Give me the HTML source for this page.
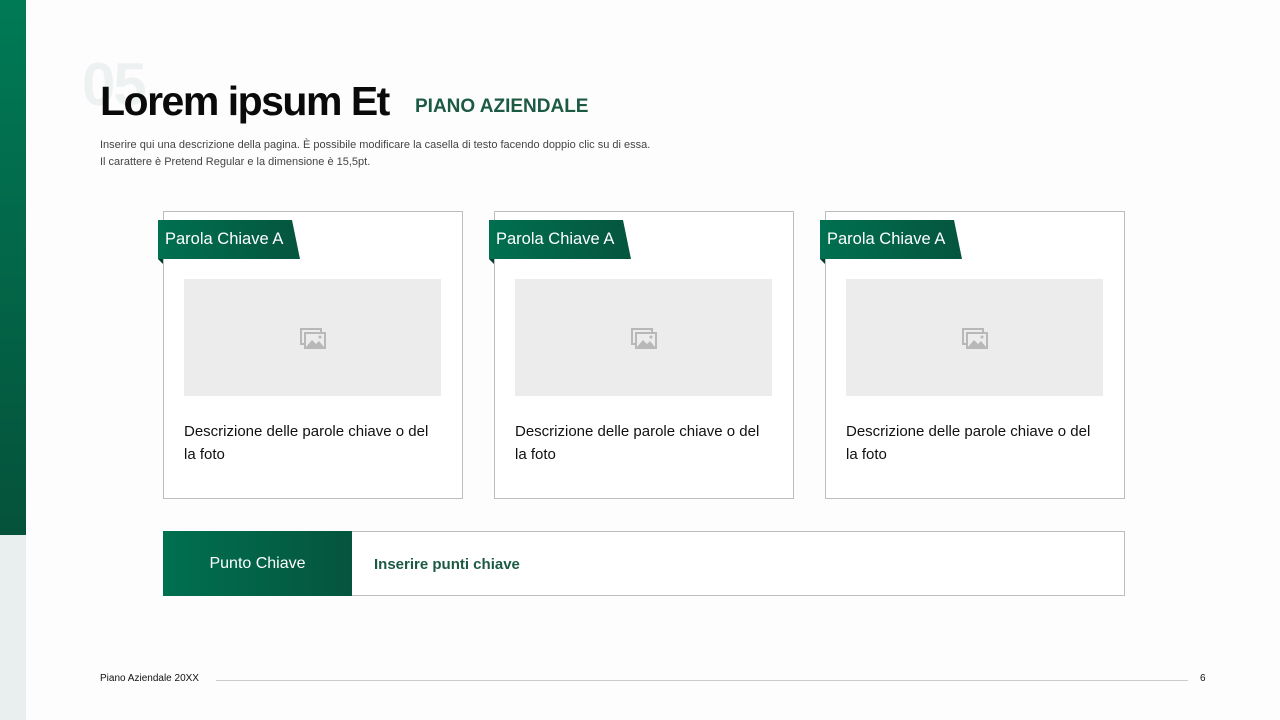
<!DOCTYPE html>
<html><head><meta charset="utf-8"><style>
*{margin:0;padding:0;box-sizing:border-box}
body{width:1280px;height:720px;background:#fdfdfd;position:relative;overflow:hidden;font-family:"Liberation Sans",sans-serif;color:#111}
.bar{position:absolute;left:0;top:0;width:26px;height:535px;background:linear-gradient(#007a55,#05523a)}
.bar2{position:absolute;left:0;top:535px;width:26px;height:185px;background:#e8efee}
.num{position:absolute;left:82px;top:50px;font-size:60px;font-weight:bold;color:#eef1f1;letter-spacing:-2px}
h1{position:absolute;left:100px;top:78px;font-size:41px;font-weight:bold;letter-spacing:-1.5px;color:#0a0a0a}
.sub{position:absolute;left:415px;top:96px;font-size:19px;font-weight:bold;color:#1d5a44}
.desc{position:absolute;left:100px;top:137px;font-size:11px;line-height:17px;color:#444}
.card{position:absolute;top:211px;width:300px;height:288px;border:1px solid #bdbdbd;background:#fff}
.tag{position:absolute;left:-6px;top:8px;width:142px;height:39px;background:linear-gradient(90deg,#007050,#05553d);clip-path:polygon(0 0,134px 0,142px 39px,0 39px);color:#fff;font-size:16.5px;padding:10px 0 0 7px}
.fold{position:absolute;left:-6px;top:47px;width:0;height:0;border-top:5px solid #033d2b;border-left:5px solid transparent}
.img{position:absolute;left:20px;top:67px;width:257px;height:117px;background:#ebeceb;display:flex;align-items:center;justify-content:center}
.txt{position:absolute;left:20px;top:208px;font-size:15px;line-height:23px;color:#111}
.kb{position:absolute;left:163px;top:531px;width:962px;height:65px;border:1px solid #bdbdbd;background:#fff}
.kg{position:absolute;left:-1px;top:-1px;width:189px;height:65px;background:linear-gradient(90deg,#007050,#05553d);color:#fff;font-size:16px;text-align:center;line-height:65px}
.kt{position:absolute;left:210px;top:24px;font-size:15px;font-weight:bold;color:#1d5a44}
.ft{position:absolute;top:673px;font-size:10px;color:#111}
.line{position:absolute;left:216px;top:680px;width:972px;height:1px;background:#ccc}
</style></head><body>
<div class="bar"></div><div class="bar2"></div>
<div class="num">05</div>
<h1>Lorem ipsum Et</h1>
<div class="sub">PIANO AZIENDALE</div>
<div class="desc">Inserire qui una descrizione della pagina. È possibile modificare la casella di testo facendo doppio clic su di essa.<br>Il carattere è Pretend Regular e la dimensione è 15,5pt.</div>

<div class="card" style="left:163px"><div class="tag">Parola Chiave A</div><div class="fold"></div><div class="img"><svg width="28" height="24" viewBox="0 0 28 24"><rect x="2" y="3" width="20" height="15" fill="none" stroke="#b8b8b8" stroke-width="2"/><rect x="6" y="7" width="20" height="15" fill="#ebeceb" stroke="#b8b8b8" stroke-width="2"/><path d="M7 21l6-7 4 4 3-3 5 6z" fill="#b8b8b8"/><circle cx="21" cy="11" r="1.5" fill="#b8b8b8"/></svg></div><div class="txt">Descrizione delle parole chiave o del<br>la foto</div></div>
<div class="card" style="left:494px"><div class="tag">Parola Chiave A</div><div class="fold"></div><div class="img"><svg width="28" height="24" viewBox="0 0 28 24"><rect x="2" y="3" width="20" height="15" fill="none" stroke="#b8b8b8" stroke-width="2"/><rect x="6" y="7" width="20" height="15" fill="#ebeceb" stroke="#b8b8b8" stroke-width="2"/><path d="M7 21l6-7 4 4 3-3 5 6z" fill="#b8b8b8"/><circle cx="21" cy="11" r="1.5" fill="#b8b8b8"/></svg></div><div class="txt">Descrizione delle parole chiave o del<br>la foto</div></div>
<div class="card" style="left:825px"><div class="tag">Parola Chiave A</div><div class="fold"></div><div class="img"><svg width="28" height="24" viewBox="0 0 28 24"><rect x="2" y="3" width="20" height="15" fill="none" stroke="#b8b8b8" stroke-width="2"/><rect x="6" y="7" width="20" height="15" fill="#ebeceb" stroke="#b8b8b8" stroke-width="2"/><path d="M7 21l6-7 4 4 3-3 5 6z" fill="#b8b8b8"/><circle cx="21" cy="11" r="1.5" fill="#b8b8b8"/></svg></div><div class="txt">Descrizione delle parole chiave o del<br>la foto</div></div>

<div class="kb"><div class="kg">Punto Chiave</div><div class="kt">Inserire punti chiave</div></div>
<div class="ft" style="left:100px">Piano Aziendale 20XX</div>
<div class="line"></div>
<div class="ft" style="left:1200px">6</div>
</body></html>
